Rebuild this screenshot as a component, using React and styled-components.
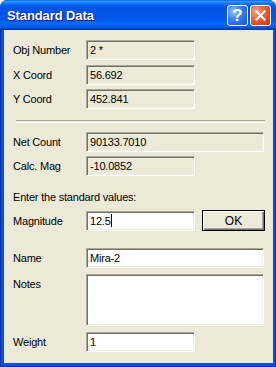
import React from 'react';
import styled, { createGlobalStyle } from 'styled-components';

const GlobalStyle = createGlobalStyle`
  html, body {
    margin: 0;
    padding: 0;
    background: #ffffff;
  }
  body {
    font-family: "Liberation Sans", Arial, sans-serif;
  }
`;

const Window = styled.div`
  width: 276px;
  height: 367px;
  box-sizing: border-box;
  display: flex;
  flex-direction: column;
  background: #0a4fe0;
  border-radius: 7px 7px 0 0;
  overflow: hidden;
`;

const TitleBar = styled.div`
  height: 30px;
  flex: none;
  display: flex;
  align-items: center;
  padding: 0 5px 0 7px;
  background: linear-gradient(
    to bottom,
    #0058ee 0%,
    #3593ff 4%,
    #288eff 7%,
    #127dff 10%,
    #036ffc 13%,
    #0262ee 17%,
    #0057e5 23%,
    #0054e3 28%,
    #0055eb 56%,
    #005bf5 68%,
    #026afe 78%,
    #0062ef 87%,
    #0052d6 93%,
    #0040ab 97%,
    #003092 100%
  );
`;

const Title = styled.div`
  flex: 1;
  color: #ffffff;
  font-family: "Liberation Sans", Arial, sans-serif;
  font-weight: bold;
  font-size: 13px;
  letter-spacing: -0.1px;
  text-shadow: 1px 1px #0f1089;
  padding-top: 1px;
`;

const CaptionButton = styled.div`
  width: 21px;
  height: 21px;
  box-sizing: border-box;
  margin-left: 2px;
  border: 1px solid #ffffff;
  border-radius: 3px;
  display: flex;
  align-items: center;
  justify-content: center;
  background: ${(p) =>
    p.$danger
      ? 'radial-gradient(circle at 30% 30%, #f5a98a 0%, #e9683e 40%, #d5401a 80%, #c0350f 100%)'
      : 'radial-gradient(circle at 30% 30%, #9fc4ff 0%, #3c81f3 40%, #1f62e6 80%, #1550d8 100%)'};
  color: #ffffff;
  font-family: "Liberation Sans", Arial, sans-serif;
  font-weight: bold;
  font-size: 17px;
  line-height: 1;
`;

const Frame = styled.div`
  flex: 1;
  display: flex;
  padding: 0 4px 4px 4px;
  background: #0a4fe0;
  box-shadow: inset 1px 0 #0831a9, inset -1px 0 #0831a9, inset 0 -1px #0831a9;
`;

const Content = styled.div`
  flex: 1;
  background: #ece9d8;
  padding: 10px 8px 0 9px;
  display: flex;
  flex-direction: column;
  font-family: "Liberation Sans", Arial, sans-serif;
  font-size: 11px;
  letter-spacing: -0.2px;
  color: #000000;
`;

const Row = styled.div`
  display: flex;
  align-items: ${(p) => (p.$top ? 'flex-start' : 'center')};
  margin-top: ${(p) => p.$mt || 0}px;
`;

const Label = styled.div`
  width: 73px;
  flex: none;
  padding-top: ${(p) => (p.$top ? 4 : 0)}px;
`;

const Field = styled.div`
  width: ${(p) => (p.$wide ? 178 : 109)}px;
  height: ${(p) => p.$h || 20}px;
  box-sizing: border-box;
  flex: none;
  display: flex;
  align-items: ${(p) => (p.$h ? 'flex-start' : 'center')};
  padding: 0 3px;
  background: ${(p) => (p.$edit ? '#ffffff' : '#ece9d8')};
  border-top: 1px solid #aca899;
  border-left: 1px solid #aca899;
  border-bottom: 1px solid #ffffff;
  border-right: 1px solid #ffffff;
  box-shadow: inset 1px 1px #716f64, inset -1px -1px #f1efe2;
  font-size: 11px;
  white-space: nowrap;
`;

const Caret = styled.span`
  display: inline-block;
  width: 1px;
  height: 13px;
  background: #000000;
`;

const Separator = styled.div`
  height: 1px;
  margin: 11px 0 0 3px;
  border-top: 1px solid #aca899;
  border-bottom: 1px solid #ffffff;
`;

const Prompt = styled.div`
  margin-top: 15px;
`;

const Button = styled.div`
  width: 63px;
  height: 21px;
  box-sizing: border-box;
  margin-left: 7px;
  display: flex;
  align-items: center;
  justify-content: center;
  border: 1px solid #000000;
  background: #ece9d8;
  box-shadow: inset 1px 1px #ffffff, inset -1px -1px #716f64, inset -2px -2px #aca899;
  font-size: 12px;
  letter-spacing: 0;
`;

export default function App() {
  return (
    <>
      <GlobalStyle />
      <Window>
        <TitleBar>
          <Title>Standard Data</Title>
          <CaptionButton>?</CaptionButton>
          <CaptionButton $danger>
            <svg width="11" height="11" viewBox="0 0 11 11">
              <path d="M1.5 1.5 L9.5 9.5 M9.5 1.5 L1.5 9.5" stroke="#fff" strokeWidth="2" strokeLinecap="square" />
            </svg>
          </CaptionButton>
        </TitleBar>
        <Frame>
          <Content>
            <Row>
              <Label>Obj Number</Label>
              <Field>2 *</Field>
            </Row>
            <Row $mt={5}>
              <Label>X Coord</Label>
              <Field>56.692</Field>
            </Row>
            <Row $mt={4}>
              <Label>Y Coord</Label>
              <Field>452.841</Field>
            </Row>
            <Separator />
            <Row $mt={9}>
              <Label>Net Count</Label>
              <Field $wide>90133.7010</Field>
            </Row>
            <Row $mt={4}>
              <Label>Calc. Mag</Label>
              <Field>-10.0852</Field>
            </Row>
            <Prompt>Enter the standard values:</Prompt>
            <Row $mt={7}>
              <Label>Magnitude</Label>
              <Field $edit>
                12.5<Caret />
              </Field>
              <Button>OK</Button>
            </Row>
            <Row $mt={17}>
              <Label>Name</Label>
              <Field $wide $edit>Mira-2</Field>
            </Row>
            <Row $top $mt={6}>
              <Label $top>Notes</Label>
              <Field $wide $edit $h={52} />
            </Row>
            <Row $mt={6}>
              <Label>Weight</Label>
              <Field $edit>1</Field>
            </Row>
          </Content>
        </Frame>
      </Window>
    </>
  );
}
